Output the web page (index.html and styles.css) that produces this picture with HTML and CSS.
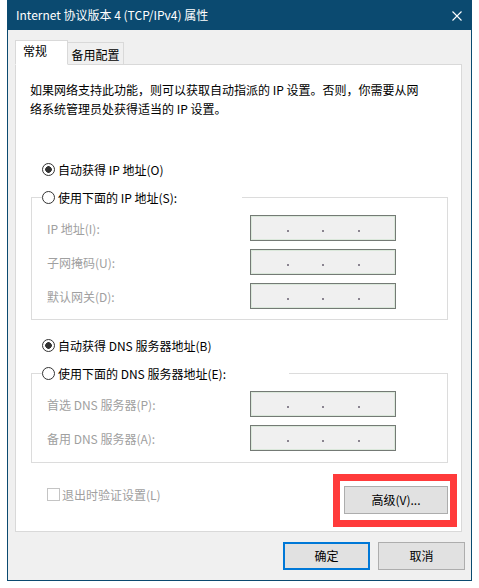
FILE: index.html
```html
<!DOCTYPE html>
<html lang="zh-CN">
<head>
    <meta charset="UTF-8">
    <title>Internet 协议版本 4 (TCP/IPv4) 属性</title>
    <link rel="stylesheet" href="styles.css">
</head>
<body>
    <div class="window">
        <div class="titlebar">
            <span class="title">Internet 协议版本 4 (TCP/IPv4) 属性</span>
            <svg class="close" width="10" height="10" viewBox="0 0 10 10" aria-label="关闭">
                <path d="M0.5 0.5 L9.5 9.5 M9.5 0.5 L0.5 9.5" stroke="#fff" stroke-width="1.1" fill="none"/>
            </svg>
        </div>
        <div class="client">
            <div class="tabs">
                <div class="tab active">常规</div>
                <div class="tab">备用配置</div>
            </div>
            <div class="panel">
                <p class="intro">如果网络支持此功能，则可以获取自动指派的 IP 设置。否则，你需要从网<br>络系统管理员处获得适当的 IP 设置。</p>

                <div class="opt first"><span class="radio checked"></span>自动获得 IP 地址(O)</div>
                <fieldset class="group ip">
                    <legend><span class="radio"></span>使用下面的 IP 地址(S):</legend>
                    <div class="field"><span>IP 地址(I):</span><div class="ipbox"><i></i><b></b><i></i><b></b><i></i><b></b><i></i></div></div>
                    <div class="field"><span>子网掩码(U):</span><div class="ipbox"><i></i><b></b><i></i><b></b><i></i><b></b><i></i></div></div>
                    <div class="field"><span>默认网关(D):</span><div class="ipbox"><i></i><b></b><i></i><b></b><i></i><b></b><i></i></div></div>
                </fieldset>

                <div class="opt"><span class="radio checked"></span>自动获得 DNS 服务器地址(B)</div>
                <fieldset class="group dns">
                    <legend><span class="radio"></span>使用下面的 DNS 服务器地址(E):</legend>
                    <div class="field"><span>首选 DNS 服务器(P):</span><div class="ipbox"><i></i><b></b><i></i><b></b><i></i><b></b><i></i></div></div>
                    <div class="field"><span>备用 DNS 服务器(A):</span><div class="ipbox"><i></i><b></b><i></i><b></b><i></i><b></b><i></i></div></div>
                </fieldset>

                <div class="footer">
                    <div class="check"><span class="box"></span>退出时验证设置(L)</div>
                    <div class="highlight">
                        <button class="btn advanced">高级(V)...</button>
                    </div>
                </div>
            </div>
            <div class="actions">
                <button class="btn primary">确定</button>
                <button class="btn">取消</button>
            </div>
        </div>
    </div>
</body>
</html>
```

FILE: styles.css
```css
* {
    box-sizing: border-box;
}
body {
    margin: 0;
    background: #fff;
    font-family: "Noto Sans CJK SC", sans-serif;
    font-size: 12px;
    color: #000;
}
.window {
    margin-left: 7px;
    width: 465px;
    height: 581px;
    border: 1px solid #0b4a70;
    border-top: 0;
    background: #f0f0f0;
}
.titlebar {
    height: 30px;
    background: #0b4a70;
    color: #fff;
    display: flex;
    align-items: center;
    justify-content: space-between;
    padding: 0 9px 0 8px;
    line-height: 16px;
}
.close {
    display: block;
    margin-top: 1px;
}
.client {
    padding: 10px 0 0 7px;
}
.tabs {
    display: flex;
    align-items: flex-end;
    height: 24px;
}
.tab {
    width: 56px;
    height: 22px;
    border: 1px solid #d9d9d9;
    border-left: 0;
    border-bottom: 0;
    text-align: center;
    padding-top: 3px;
    line-height: 17px;
}
.tab.active {
    position: relative;
    z-index: 1;
    width: 53px;
    height: 25px;
    margin-bottom: -1px;
    border-left: 1px solid #d9d9d9;
    border-bottom: 1px solid #fff;
    background: #fff;
    text-align: left;
    padding: 1px 0 0 7px;
}
.panel {
    width: 447px;
    height: 468px;
    border: 1px solid #d9d9d9;
    background: #fff;
    padding-top: 15px;
}
.intro {
    margin: 0 0 0 14px;
    line-height: 19px;
}
.opt {
    display: flex;
    align-items: center;
    height: 19px;
    margin: 16px 0 0 26px;
}
.opt.first {
    margin-top: 42px;
}
.radio {
    width: 13px;
    height: 13px;
    border: 1px solid #333;
    border-radius: 50%;
    margin-right: 3px;
    flex: none;
    background: #fff;
}
.radio.checked {
    background: radial-gradient(circle, #333 3px, #fff 3.6px);
}
.group {
    margin: 9px 0 0 15px;
    width: 417px;
    min-width: 0;
    padding: 8px 0 10px 0;
    border: 1px solid #dcdcdc;
}
.group.dns {
    padding-bottom: 11px;
}
.group legend {
    display: flex;
    align-items: center;
    height: 19px;
    width: 200px;
    margin-left: 10px;
    padding: 0;
}
.group.dns legend {
    width: 247px;
}
.field {
    display: grid;
    grid-template-columns: 203px 146px;
    align-items: center;
    padding-left: 15px;
    color: #a0a0a0;
    line-height: 17px;
}
.field + .field {
    margin-top: 8px;
}
.ipbox {
    height: 26px;
    border: 1px solid #747a75;
    box-shadow: inset 0 0 0 1px #dbe8db;
    background: #f0f0f0;
    display: flex;
    align-items: center;
    padding: 0 2px;
}
.ipbox i {
    flex: 1;
}
.ipbox b {
    width: 2px;
    height: 2px;
    margin-top: 5px;
    background: #8a8490;
}
.footer {
    display: flex;
    justify-content: space-between;
    align-items: flex-start;
    margin-top: 11px;
    padding: 0 4px 0 31px;
}
.check {
    display: flex;
    align-items: center;
    margin-top: 14px;
    height: 13px;
    color: #a0a0a0;
    line-height: 13px;
}
.check .box {
    width: 13px;
    height: 13px;
    border: 1px solid #c4c4c4;
    margin-right: 2px;
    background: #fff;
}
.highlight {
    width: 124px;
    border: 7px solid #ff3b3b;
    background: #fff;
    padding: 5px 2px 6px 4px;
}
.btn {
    display: block;
    width: 87px;
    height: 28px;
    border: 1px solid #adadad;
    background: #e1e1e1;
    font-family: inherit;
    font-size: 12px;
    color: #000;
    padding: 0;
    line-height: 16px;
}
.btn.advanced {
    width: 104px;
}
.btn.primary {
    border: 2px solid #0078d7;
}
.actions {
    display: flex;
    justify-content: flex-end;
    gap: 8px;
    margin-top: 10px;
    padding-right: 6px;
}
```
